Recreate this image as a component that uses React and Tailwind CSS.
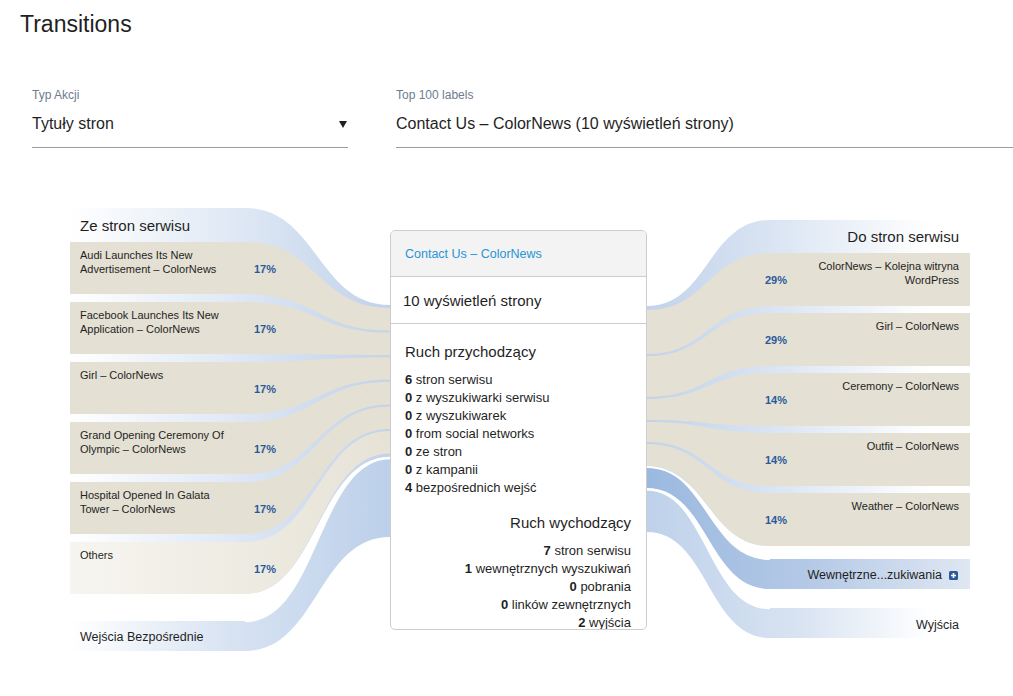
import React from "react";

const leftItems = [
  { label: "Audi Launches Its New Advertisement – ColorNews", pct: "17%" },
  { label: "Facebook Launches Its New Application – ColorNews", pct: "17%" },
  { label: "Girl – ColorNews", pct: "17%" },
  { label: "Grand Opening Ceremony Of Olympic – ColorNews", pct: "17%" },
  { label: "Hospital Opened In Galata Tower – ColorNews", pct: "17%" },
  { label: "Others", pct: "17%" },
];

const rightItems = [
  { label: "ColorNews – Kolejna witryna WordPress", pct: "29%" },
  { label: "Girl – ColorNews", pct: "29%" },
  { label: "Ceremony – ColorNews", pct: "14%" },
  { label: "Outfit – ColorNews", pct: "14%" },
  { label: "Weather – ColorNews", pct: "14%" },
];

const incoming = [
  ["6", "stron serwisu"],
  ["0", "z wyszukiwarki serwisu"],
  ["0", "z wyszukiwarek"],
  ["0", "from social networks"],
  ["0", "ze stron"],
  ["0", "z kampanii"],
  ["4", "bezpośrednich wejść"],
];

const outgoing = [
  ["7", "stron serwisu"],
  ["1", "wewnętrznych wyszukiwań"],
  ["0", "pobrania"],
  ["0", "linków zewnętrznych"],
  ["2", "wyjścia"],
];

// left node -> center, flat box from x=70 to 245
const leftPath = (t, b, ct, cb) =>
  `M70,${t} L245,${t} C317.5,${t} 317.5,${ct} 390,${ct} L390,${cb} C317.5,${cb} 317.5,${b} 245,${b} L70,${b} Z`;

// center -> right node, flat box from x=770 to 970
const rightPath = (ct, cb, t, b) =>
  `M647,${ct} C708,${ct} 708,${t} 770,${t} L970,${t} L970,${b} L770,${b} C708,${b} 708,${cb} 647,${cb} Z`;

function Flows() {
  const leftTops = [42, 102, 162, 222, 282, 342];
  const rightTops = [53, 113, 173, 233, 293];
  const rightCenter = [
    [110, 154],
    [156, 197],
    [199, 220],
    [222, 242],
    [244, 266],
  ];
  return (
    <svg
      className="absolute inset-0 pointer-events-none"
      width="1013"
      height="470"
      viewBox="0 0 1013 470"
    >
      <defs>
        <linearGradient id="lblue" gradientUnits="userSpaceOnUse" x1="70" y1="0" x2="390" y2="0">
          <stop offset="0" stopColor="#ffffff" />
          <stop offset="0.45" stopColor="#e3ebf6" />
          <stop offset="1" stopColor="#c1d2ea" />
        </linearGradient>
        <linearGradient id="ldirect" gradientUnits="userSpaceOnUse" x1="70" y1="0" x2="390" y2="0">
          <stop offset="0" stopColor="#ffffff" />
          <stop offset="0.5" stopColor="#d8e3f2" />
          <stop offset="1" stopColor="#bcd0ea" />
        </linearGradient>
        <linearGradient id="others" gradientUnits="userSpaceOnUse" x1="70" y1="0" x2="390" y2="0">
          <stop offset="0" stopColor="#f7f5f0" />
          <stop offset="1" stopColor="#e6e2d6" />
        </linearGradient>
        <linearGradient id="rblue" gradientUnits="userSpaceOnUse" x1="647" y1="0" x2="930" y2="0">
          <stop offset="0" stopColor="#c1d2ea" />
          <stop offset="0.5" stopColor="#dde7f4" />
          <stop offset="1" stopColor="#ffffff" />
        </linearGradient>
        <linearGradient id="rsearch" gradientUnits="userSpaceOnUse" x1="647" y1="0" x2="970" y2="0">
          <stop offset="0" stopColor="#9bb9df" />
          <stop offset="0.5" stopColor="#b4c9e6" />
          <stop offset="1" stopColor="#dfe7f2" />
        </linearGradient>
        <linearGradient id="rexit" gradientUnits="userSpaceOnUse" x1="647" y1="0" x2="930" y2="0">
          <stop offset="0" stopColor="#bed1ea" />
          <stop offset="0.55" stopColor="#d9e4f2" />
          <stop offset="1" stopColor="#ffffff" />
        </linearGradient>
      </defs>

      {/* left side */}
      <path d={leftPath(8, 394, 105, 257)} fill="url(#lblue)" />
      {leftTops.map((t, i) => {
        const ct = 108 + 24.6 * i;
        return (
          <path
            key={t}
            d={leftPath(t, t + 52, ct, ct + 22.6)}
            fill={i === 5 ? "url(#others)" : "#e4e0d3"}
          />
        );
      })}
      <path d={leftPath(421, 451, 258, 337)} fill="url(#ldirect)" />
      <path
        d="M245,421 C317.5,421 317.5,258 390,258"
        fill="none"
        stroke="#ffffff"
        strokeWidth="2.5"
      />

      {/* right side */}
      <path d={rightPath(106, 267, 20, 346)} fill="url(#rblue)" />
      {rightTops.map((t, i) => (
        <path
          key={t}
          d={rightPath(rightCenter[i][0], rightCenter[i][1], t, t + 53)}
          fill="#e4e0d3"
        />
      ))}
      <path d={rightPath(267, 288, 359, 389)} fill="url(#rsearch)" />
      <path d={rightPath(290, 332, 408, 438)} fill="url(#rexit)" />
      <path
        d="M647,267 C708,267 708,359 770,359"
        fill="none"
        stroke="#ffffff"
        strokeWidth="2"
      />
      <path
        d="M647,289.5 C708,289.5 708,408 770,408"
        fill="none"
        stroke="#ffffff"
        strokeWidth="2.5"
      />
    </svg>
  );
}

function Field({ label, value, width, arrow }) {
  return (
    <div className={`${width} border-b border-[#9c9c9c] pb-[12px]`}>
      <div className="text-[12px] leading-[16px] text-[#6d7c8e]">{label}</div>
      <div className="mt-[10px] flex items-center justify-between text-[16px] leading-[22px] text-[#1f1f1f]">
        <span>{value}</span>
        {arrow && (
          <svg width="8" height="7" viewBox="0 0 8 7" className="mr-[1px]">
            <path d="M0,0 L8,0 L4,7 Z" fill="#1f1f1f" />
          </svg>
        )}
      </div>
    </div>
  );
}

export default function App() {
  return (
    <div className="w-[1013px] min-h-[696px] bg-white font-['Liberation_Sans',Arial,sans-serif] text-[#1f1f1f]">
      <h1 className="px-[20px] pt-[10px] text-[23px] leading-[28px] font-normal">
        Transitions
      </h1>

      <div className="mt-[49px] flex gap-[48px] pl-[32px]">
        <Field label="Typ Akcji" value="Tytuły stron" width="w-[316px]" arrow />
        <Field
          label="Top 100 labels"
          value="Contact Us – ColorNews (10 wyświetleń strony)"
          width="w-[617px]"
        />
      </div>

      <div className="relative mt-[52px] h-[470px] w-[1013px]">
        <Flows />

        <div className="relative flex">
          {/* incoming pages */}
          <div className="w-[390px] pl-[70px] pt-[9px]">
            <div className="flex h-[33px] items-center pl-[10px] pt-[2px] text-[15px]">
              Ze stron serwisu
            </div>
            <div className="flex flex-col gap-[8px]">
              {leftItems.map((item) => (
                <div
                  key={item.label}
                  className="flex h-[52px] pl-[10px] pt-[6px] text-[11px] leading-[14px]"
                >
                  <div className="w-[174px] pr-[19px]">{item.label}</div>
                  <div className="mt-[14px] font-bold text-[#2a5a9c]">{item.pct}</div>
                </div>
              ))}
            </div>
            <div className="mt-[27px] flex h-[30px] items-center pl-[10px] pt-[3px] text-[12.5px]">
              Wejścia Bezpośrednie
            </div>
          </div>

          {/* center node */}
          <div className="w-[257px] pt-[30px]">
            <div className="h-[400px] overflow-hidden rounded-[5px] border border-[#cdcdcd] bg-white">
              <div className="flex h-[46px] items-center border-b border-[#cdcdcd] bg-[#f3f3f3] px-[14px] pt-[2px] text-[12.5px] text-[#2993d6]">
                Contact Us – ColorNews
              </div>
              <div className="flex h-[47px] items-center border-b border-[#cdcdcd] pl-[12px] pt-[2px] text-[15px]">
                10 wyświetleń strony
              </div>
              <div className="px-[14px] pt-[18px]">
                <div className="text-[15px] leading-[20px]">Ruch przychodzący</div>
                <div className="mt-[9px] text-[13px] leading-[18px]">
                  {incoming.map(([n, t]) => (
                    <div key={t}>
                      <b>{n}</b> {t}
                    </div>
                  ))}
                </div>
                <div className="mt-[16px] pr-[1px] text-right text-[15px] leading-[20px]">
                  Ruch wychodzący
                </div>
                <div className="mt-[9px] pr-[1px] text-right text-[13px] leading-[18px]">
                  {outgoing.map(([n, t]) => (
                    <div key={t}>
                      <b>{n}</b> {t}
                    </div>
                  ))}
                </div>
              </div>
            </div>
          </div>

          {/* outgoing pages */}
          <div className="w-[366px] pt-[20px]">
            <div className="flex h-[33px] items-center justify-end pr-[54px] pt-[2px] text-[15px]">
              Do stron serwisu
            </div>
            <div className="flex flex-col gap-[7px]">
              {rightItems.map((item) => (
                <div
                  key={item.label + item.pct}
                  className="flex h-[53px] pt-[6px] text-[11px] leading-[14px]"
                >
                  <div className="ml-[100px] mt-[14px] w-[40px] text-right font-bold text-[#2a5a9c]">
                    {item.pct}
                  </div>
                  <div className="ml-auto mr-[54px] w-[160px] text-right">{item.label}</div>
                </div>
              ))}
            </div>
            <div className="mt-[13px] flex h-[30px] items-center justify-end gap-[7px] pr-[55px] pt-[2px] text-[12.5px]">
              <span>Wewnętrzne...zukiwania</span>
              <svg width="9" height="9" viewBox="0 0 9 9">
                <rect width="9" height="9" rx="1.5" fill="#2a5a9c" />
                <path d="M4.5,2 V7 M2,4.5 H7" stroke="#ffffff" strokeWidth="1.6" />
              </svg>
            </div>
            <div className="mt-[19px] flex h-[30px] items-center justify-end pr-[54px] pt-[5px] text-[12.5px]">
              Wyjścia
            </div>
          </div>
        </div>
      </div>
    </div>
  );
}
